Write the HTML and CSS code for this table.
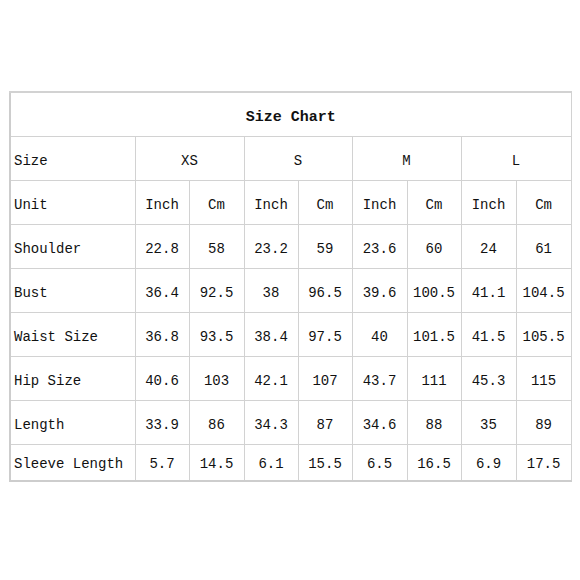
FILE: index.html
```html
<!DOCTYPE html>
<html>
<head>
<meta charset="utf-8">
<link rel="stylesheet" href="styles.css">
</head>
<body>
<table class="chart">
  <colgroup>
    <col class="c-label">
    <col class="c-a"><col class="c-b">
    <col class="c-a"><col class="c-a">
    <col class="c-b"><col class="c-a">
    <col class="c-b"><col class="c-b">
  </colgroup>
  <tr class="title-row"><td colspan="9" class="title">Size Chart</td></tr>
  <tr><td class="label">Size</td><td colspan="2">XS</td><td colspan="2">S</td><td colspan="2">M</td><td colspan="2">L</td></tr>
  <tr><td class="label">Unit</td><td class="unit">Inch</td><td class="unit">Cm</td><td class="unit">Inch</td><td class="unit">Cm</td><td class="unit">Inch</td><td class="unit">Cm</td><td class="unit">Inch</td><td class="unit">Cm</td></tr>
  <tr><td class="label">Shoulder</td><td>22.8</td><td>58</td><td>23.2</td><td>59</td><td>23.6</td><td>60</td><td>24</td><td>61</td></tr>
  <tr><td class="label">Bust</td><td>36.4</td><td>92.5</td><td>38</td><td>96.5</td><td>39.6</td><td>100.5</td><td>41.1</td><td>104.5</td></tr>
  <tr><td class="label">Waist Size</td><td>36.8</td><td>93.5</td><td>38.4</td><td>97.5</td><td>40</td><td>101.5</td><td>41.5</td><td>105.5</td></tr>
  <tr><td class="label">Hip Size</td><td>40.6</td><td>103</td><td>42.1</td><td>107</td><td>43.7</td><td>111</td><td>45.3</td><td>115</td></tr>
  <tr><td class="label">Length</td><td>33.9</td><td>86</td><td>34.3</td><td>87</td><td>34.6</td><td>88</td><td>35</td><td>89</td></tr>
  <tr class="last-row"><td class="label">Sleeve Length</td><td>5.7</td><td>14.5</td><td>6.1</td><td>15.5</td><td>6.5</td><td>16.5</td><td>6.9</td><td>17.5</td></tr>
</table>
</body>
</html>
```
FILE: styles.css
```css
html, body {
  margin: 0;
  padding: 0;
  background: #ffffff;
}
body {
  padding: 91px 0 0 9px;
  font-family: "Liberation Mono", "DejaVu Sans Mono", monospace;
  font-size: 14px;
  color: #111111;
}
.chart {
  border-collapse: collapse;
  table-layout: fixed;
  width: 561px;
  border-left: 2px solid #cdcdcd;
  border-top: 2px solid #d2d2d2;
  border-bottom: 2px solid #cdcdcd;
  border-right: 1px solid #cdcdcd;
}
.c-label { width: 125px; }
.c-a { width: 54px; }
.c-b { width: 55px; }
.chart td {
  border: 1px solid #d2d2d2;
  height: 38px;
  padding: 5px 0 0 0;
  text-align: center;
  vertical-align: middle;
  white-space: nowrap;
  overflow: hidden;
}
.chart td.label {
  text-align: left;
  padding-left: 3px;
}
.chart .title {
  font-weight: bold;
  font-size: 15px;
}
.last-row td {
  height: 32px;
  padding-top: 3px;
}
```
